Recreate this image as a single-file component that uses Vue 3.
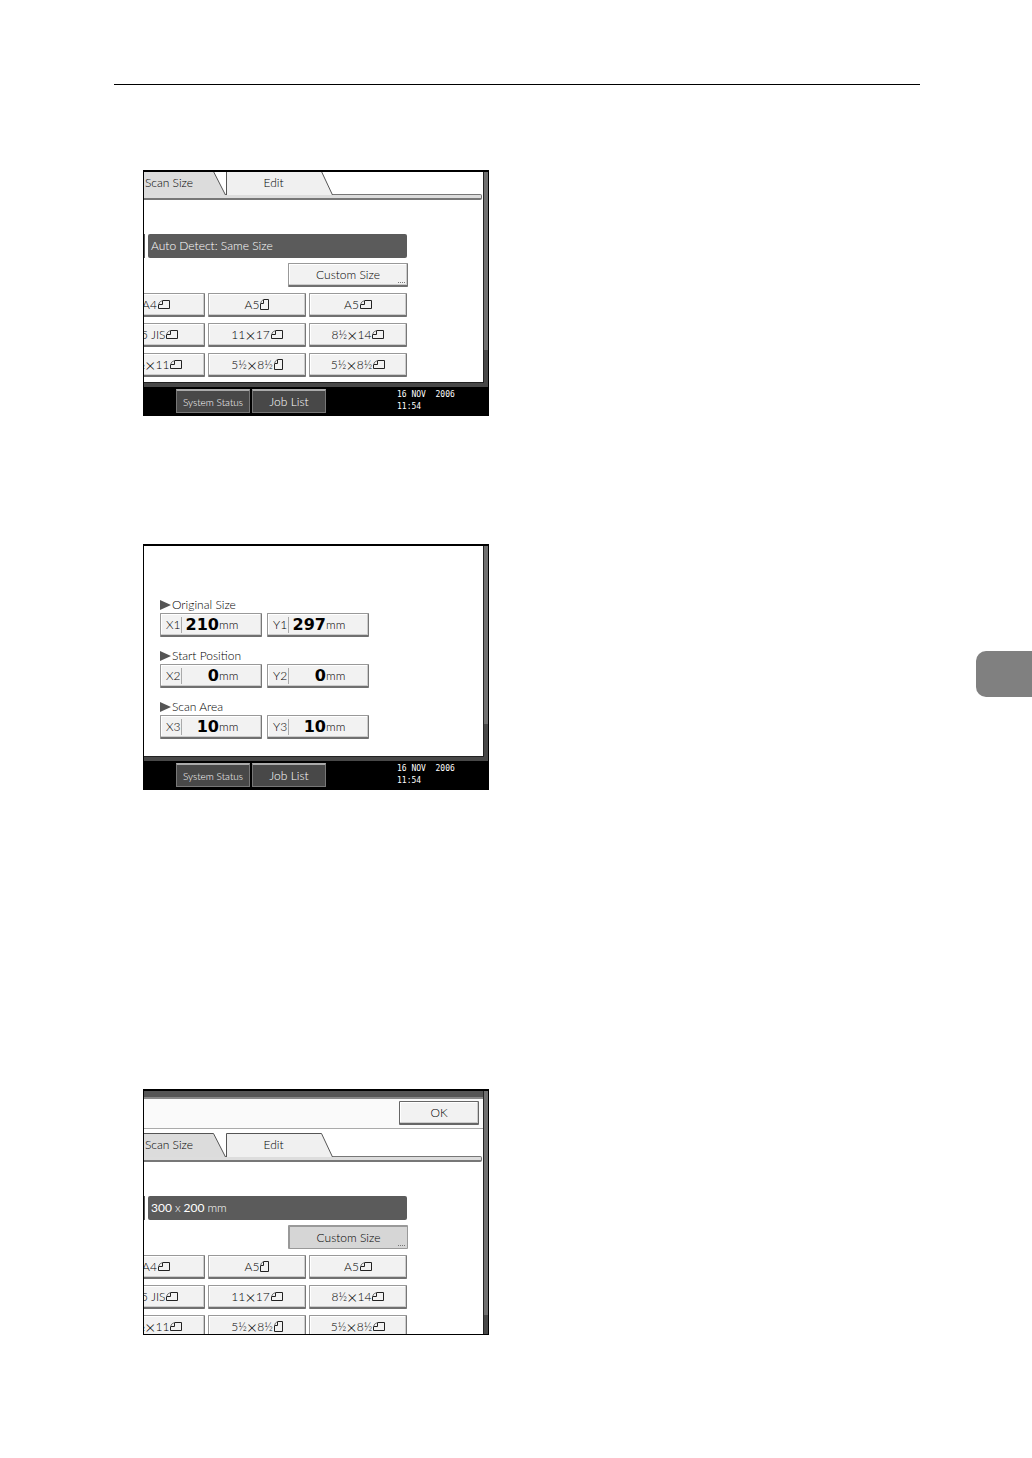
<template>
  <div class="page">
    <main class="content">
      <hr class="rule" />

      <section
        v-for="screen in screens"
        :key="screen.id"
        class="screen"
        :class="screen.id"
      >
        <div class="frame">
          <div class="panel">
            <!-- Title strip with OK -->
            <template v-if="screen.ok">
              <div class="strip"></div>
              <div class="ok-row">
                <button class="key ok">OK</button>
              </div>
            </template>

            <template v-if="screen.info">
              <div class="tabs">
                <button class="tab current">
                  <svg width="120" height="24" viewBox="0 0 120 24">
                    <path d="M0 .5H107.500L119.500 24H0Z" fill="#dcdcdc" />
                    <path d="M0 .5H107.500L119.500 24" fill="none" stroke="#555" />
                  </svg>
                  <span>Scan Size</span>
                </button>
                <button class="tab">
                  <svg width="107" height="24" viewBox="0 0 107 24">
                    <path d="M.5 24V.5H95.500L106.500 24Z" fill="#f0f0f0" />
                    <path d="M.5 24V.5H95.500L106.500 24" fill="none" stroke="#555" />
                  </svg>
                  <span>Edit</span>
                </button>
              </div>
              <div class="tab-line"></div>

              <div class="info-row">
                <div class="info"></div>
                <div class="info wide">
                  <template v-for="(part, i) in screen.info" :key="i">
                    <b v-if="part.bold">{{ part.text }}</b>
                    <span v-else>{{ part.text }}</span>
                  </template>
                </div>
              </div>

              <div class="custom-row">
                <button class="key custom" :class="{ pressed: screen.pressed }">
                  Custom Size<i class="dots"></i>
                </button>
              </div>

              <div class="sizes">
                <button v-for="(size, i) in sizes" :key="i" class="key">
                  <template v-for="(part, n) in size.label.split('×')" :key="n">
                    <span v-if="n" class="times">×</span>{{ part }}
                  </template>
                  <svg v-if="size.portrait" class="sheet" width="9" height="11" viewBox="0 0 9 11">
                    <path d="M3.500 .5H8.500V10.500H.5V4.500H3.500Z" />
                    <path class="fold" d="M.5 4.500Q1 1.500 3.500 .5" />
                  </svg>
                  <svg v-else class="sheet" width="12" height="9" viewBox="0 0 12 9">
                    <path d="M4.500 .5H11.500V8.500H.5V4.500H4.500Z" />
                    <path class="fold" d="M.5 4.500Q1 1.500 4.500 .5" />
                  </svg>
                </button>
              </div>
            </template>

            <div v-else class="groups">
              <div v-for="group in groups" :key="group.title" class="group">
                <h2>
                  <svg width="11" height="10" viewBox="0 0 11 10">
                    <path d="M0 0L11 5L0 10Z" fill="#555" />
                  </svg>
                  {{ group.title }}
                </h2>
                <div class="values">
                  <button v-for="v in group.values" :key="v.axis" class="key value">
                    <span class="axis">{{ v.axis }}</span>
                    <strong>{{ v.amount }}</strong>
                    <span>mm</span>
                  </button>
                </div>
              </div>
            </div>
          </div>
        </div>

        <footer v-if="!screen.ok" class="status">
          <button class="dark-key">System Status</button>
          <button class="dark-key job">Job List</button>
          <div class="clock">16 NOV&nbsp; 2006<br />11:54</div>
        </footer>
      </section>
    </main>

    <aside class="thumb"></aside>
  </div>
</template>

<script setup>
const screens = [
  { id: "auto", info: [{ text: "Auto Detect: Same Size" }] },
  { id: "area" },
  {
    id: "result",
    ok: true,
    pressed: true,
    info: [
      { text: "300", bold: true },
      { text: "x" },
      { text: "200", bold: true },
      { text: "mm" },
    ],
  },
];

const sizes = [
  { label: "A4" },
  { label: "A5", portrait: true },
  { label: "A5" },
  { label: "B5 JIS" },
  { label: "11×17" },
  { label: "8½×14" },
  { label: "8½×11" },
  { label: "5½×8½", portrait: true },
  { label: "5½×8½" },
];

const groups = [
  {
    title: "Original Size",
    values: [{ axis: "X1", amount: 210 }, { axis: "Y1", amount: 297 }],
  },
  {
    title: "Start Position",
    values: [{ axis: "X2", amount: 0 }, { axis: "Y2", amount: 0 }],
  },
  {
    title: "Scan Area",
    values: [{ axis: "X3", amount: 10 }, { axis: "Y3", amount: 10 }],
  },
];
</script>

<style>
body {
  margin: 0;
  background: #fff;
}
</style>

<style scoped>
* {
  box-sizing: border-box;
}

.page {
  display: flex;
  align-items: flex-start;
  min-height: 100vh;
  font: 300 12px/16px Lato, "Liberation Sans", sans-serif;
  color: #000;
}

.content {
  flex: 1;
  padding: 84px 56px 0 114px;
}

.rule {
  height: 1px;
  margin: 0 0 85px;
  border: 0;
  background: #000;
}

.thumb {
  width: 56px;
  height: 46px;
  margin-top: 651px;
  border-radius: 10px 0 0 10px;
  background: #808080;
}

.screen {
  display: flex;
  flex-direction: column;
  width: 100%;
  max-width: 346px;
  aspect-ratio: 346 / 246;
  margin-left: 29px;
  border: 1px solid #000;
  border-width: 2px 1px 1px 1px;
  overflow: hidden;
}

.area {
  margin-top: 128px;
}

.result {
  margin-top: 299px;
}

.frame {
  flex: 1;
  display: flex;
  min-height: 0;
  padding: 0 4px 4px 0;
  background: linear-gradient(#707070 83%, #484848 83%);
}

.result .frame {
  padding-bottom: 0;
  background: linear-gradient(#707070 92%, #484848 92%);
}

.panel {
  flex: 1;
  min-width: 0;
  border: 0 solid #222;
  border-width: 0 1px 1px 0;
  background: #fff;
  overflow: hidden;
}

.result .panel {
  border-bottom: 0;
}

button {
  padding: 0;
  font: inherit;
  color: inherit;
}

.key {
  display: flex;
  align-items: center;
  justify-content: center;
  height: 24px;
  border: 1px solid #999;
  border-right-color: #777;
  border-bottom: 2px solid #707070;
  border-radius: 1px;
  background: #f2f2f2;
  box-shadow: inset -1px -1px #ccc, inset 1px 1px #fff;
  white-space: nowrap;
}

.strip {
  height: 8px;
  border-bottom: 2px solid #888;
  background: #555;
}

.ok-row {
  display: flex;
  justify-content: flex-end;
  padding: 2px 4px 3px 0;
  border-bottom: 1px solid #aaa;
  background: #fafafa;
}

.ok {
  width: 80px;
  border-color: #666;
}

.tabs {
  display: flex;
  margin: -1px 0 0 -38px;
}

.result .tabs {
  margin-top: 4px;
}

.tab {
  position: relative;
  width: 120px;
  height: 23px;
  border: 0;
  background: none;
}

.tab + .tab {
  width: 107px;
  padding-right: 12px;
}

.tab svg {
  position: absolute;
  inset: 0;
}

.tab span {
  position: relative;
}

.current {
  padding-left: 6px;
}

.tab-line {
  height: 6px;
  margin-right: 1px;
  border: 1px solid #777;
  border-width: 1px 1px 2px 0;
  border-radius: 0 2px 2px 0;
  background: #ddd;
}

.info-row {
  display: flex;
  gap: 3px;
  margin-top: 34px;
}

.info {
  width: 1px;
  height: 24px;
  background: #5b5b5b;
}

.wide {
  display: flex;
  align-items: center;
  gap: 3px;
  width: 259px;
  padding-left: 3px;
  border-radius: 2px;
  color: #fff;
}

.custom-row {
  display: flex;
  margin: 5px 0 6px 144px;
}

.custom {
  position: relative;
  width: 120px;
}

.pressed {
  border: 1px solid #999;
  border-width: 2px 1px 1px 2px;
  background: #d6d6d6;
  box-shadow: none;
}

.dots {
  position: absolute;
  right: 2px;
  bottom: 2px;
  width: 7px;
  border-bottom: 1px dotted #777;
}

.sizes {
  display: grid;
  grid-template-columns: repeat(3, 98px);
  gap: 6px 3px;
  margin-left: -37px;
}

.times {
  font-size: 18px;
}

.sheet {
  margin-left: 1px;
  fill: none;
  stroke: #222;
}

.fold {
  stroke: #777;
}

.groups {
  display: flex;
  flex-direction: column;
  gap: 11px;
  padding: 51px 0 0 16px;
}

.group h2 {
  display: flex;
  align-items: center;
  gap: 1px;
  height: 16px;
  margin: 0;
  font-size: 12px;
  font-weight: 300;
}

.values {
  display: flex;
  gap: 5px;
}

.value {
  justify-content: flex-start;
  padding-left: 5px;
  width: 102px;
}

.axis {
  width: 16px;
  border-right: 1px solid #aaa;
  text-align: left;
}

.value strong {
  width: 37px;
  font: bold 16px/16px "DejaVu Sans", sans-serif;
  text-align: right;
}

.status {
  display: flex;
  align-items: flex-start;
  height: 28px;
  padding: 2px 0 0 32px;
  background: #000;
  color: #fff;
}

.dark-key {
  width: 74px;
  height: 24px;
  border: 1px solid #777;
  border-top: 2px solid #aaa;
  background: #484848;
  font-size: 10px;
  white-space: nowrap;
}

.job {
  margin-left: 2px;
  font-size: 12px;
}

.clock {
  margin-left: 71px;
  font: 8px/12px "DejaVu Sans Mono", monospace;
  white-space: nowrap;
}
</style>
